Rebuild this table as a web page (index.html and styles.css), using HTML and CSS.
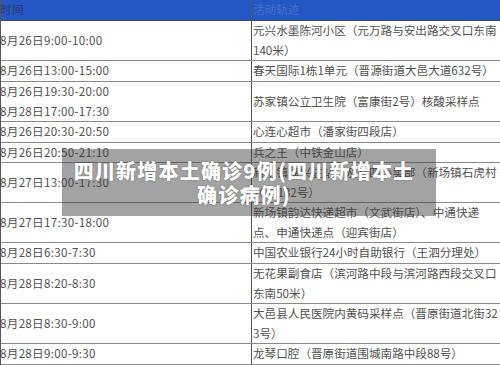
FILE: index.html
```html
<!DOCTYPE html>
<html lang="zh">
<head>
<meta charset="utf-8">
<link rel="stylesheet" href="styles.css">
</head>
<body>
<div class="page">
  <div class="table">
    <div class="row head">
      <div class="c l">时间</div>
      <div class="c r hr">活动轨迹</div>
    </div>
    <div class="row d">
      <div class="c l">8月26日9:00-10:00</div>
      <div class="c r">元兴水墨陈河小区（元万路与安出路交叉口东南<br>140米）</div>
    </div>
    <div class="row s">
      <div class="c l">8月26日13:00-15:00</div>
      <div class="c r">春天国际1栋1单元（晋源街道大邑大道632号）</div>
    </div>
    <div class="row d">
      <div class="c l">8月26日19:30-20:00<br>8月28日17:00-17:30</div>
      <div class="c r">苏家镇公立卫生院（富康街2号）核酸采样点</div>
    </div>
    <div class="row s">
      <div class="c l">8月26日20:30-20:50</div>
      <div class="c r">心连心超市（潘家街四段店）</div>
    </div>
    <div class="row s t">
      <div class="c l">8月26日20:50-21:10</div>
      <div class="c r">兵之王（中铁金山店）</div>
    </div>
    <div class="row d">
      <div class="c l">8月27日13:00-17:30</div>
      <div class="c r">新场镇隆兴驻站、及乔四小卖部（新场镇石虎村<br>16组132号）</div>
    </div>
    <div class="row d">
      <div class="c l">8月27日17:30-18:00</div>
      <div class="c r">新场镇韵达快递超市（文武街店）、中通快递<br>点、申通快递点（迎宾街店）</div>
    </div>
    <div class="row s">
      <div class="c l">8月28日6:30-7:30</div>
      <div class="c r">中国农业银行24小时自助银行（王泗分理处）</div>
    </div>
    <div class="row d">
      <div class="c l">8月28日8:20-8:30</div>
      <div class="c r">无花果副食店（滨河路中段与滨河路西段交叉口<br>东南50米）</div>
    </div>
    <div class="row d">
      <div class="c l">8月28日8:30-9:00</div>
      <div class="c r">大邑县人民医院内黄码采样点（晋原街道北街32<br>3号）</div>
    </div>
    <div class="row s">
      <div class="c l">8月28日9:00-9:30</div>
      <div class="c r">龙琴口腔（晋原街道围城南路中段88号）</div>
    </div>
  </div>
  <div class="banner">
    <h1 class="title">四川新增本土确诊9例(四川新增本土<br>确诊病例)</h1>
  </div>
</div>
</body>
</html>
```
FILE: styles.css
```css
html, body {
  margin: 0;
  padding: 0;
  background: #ffffff;
}
.page {
  position: relative;
  width: 500px;
  height: 365px;
  overflow: hidden;
  font-family: "Noto Sans CJK SC", "Microsoft YaHei", sans-serif;
}
.table {
  display: flex;
  flex-direction: column;
  border-left: 1px solid #555;
}
.row {
  display: grid;
  grid-template-columns: 250px 250px;
  border-bottom: 1px solid #8a8a8a;
  color: #505050;
  font-size: 11.6px;
  line-height: 19.5px;
  white-space: nowrap;
}
.row.s { height: 20px; }
.row.t { height: 19px; }
.row.d { height: 39px; }
.row.head {
  height: 20px;
  background: #2357c6;
  border-top: 1px solid #33407a;
  border-bottom: 1px solid #3c4a6a;
  margin-top: -1px;
  color: #303a66;
}
.c {
  display: flex;
  align-items: center;
  overflow: hidden;
}
.l {
  padding-left: 0;
  margin-left: -1px;
  letter-spacing: 0.3px;
}
.r {
  border-left: 1px solid #555;
  padding-left: 1px;
}
.hr {
  color: #4d6fc0;
}
.banner {
  position: absolute;
  left: 62px;
  top: 149px;
  width: 374px;
  height: 67px;
  background: rgba(60, 60, 60, 0.47);
  display: flex;
  align-items: center;
  justify-content: center;
}
.title {
  margin: 0;
  color: #ffffff;
  font-family: "Noto Sans CJK SC", sans-serif;
  font-weight: 900;
  font-size: 20px;
  line-height: 24px;
  letter-spacing: 1.2px;
  text-align: center;
  text-shadow: 0 0 2px rgba(0, 0, 0, 0.35);
  margin-left: -10px;
}
```
